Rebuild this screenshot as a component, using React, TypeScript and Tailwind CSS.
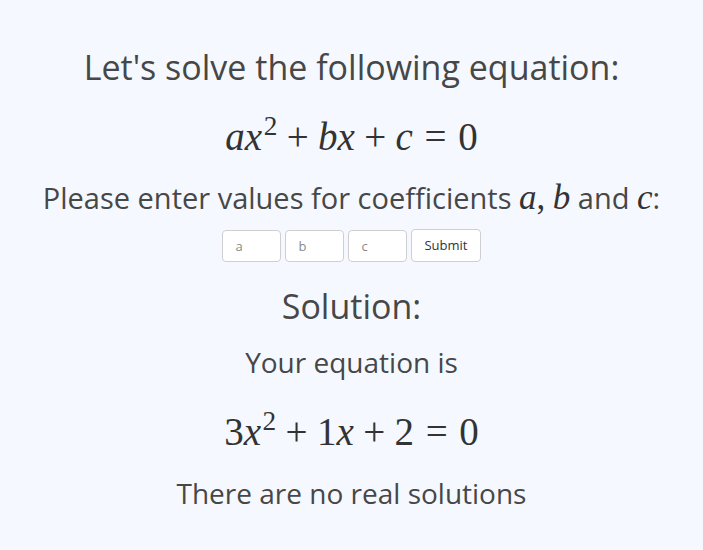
const sans = "font-['Open_Sans','Noto_Sans',sans-serif]";
const serif = "font-['Liberation_Serif','DejaVu_Serif',serif]";

function V({ children }: { children: React.ReactNode }) {
  return <span className="italic">{children}</span>;
}

function Op({ children, wide }: { children: React.ReactNode; wide?: boolean }) {
  return <span className={wide ? "mx-[0.3em]" : "mx-[0.24em]"}>{children}</span>;
}

function Sup({ children }: { children: React.ReactNode }) {
  return <sup className="relative top-[-0.55em] ml-[0.06em] align-baseline text-[0.7em]">{children}</sup>;
}

export default function App() {
  return (
    <div className={`min-h-screen w-full bg-[#f5f9ff] text-[#474747] ${sans}`}>
      <div className="flex flex-col items-center pt-[40px] text-center">
        <h1 className="text-[34px] leading-[54px]">Let's solve the following equation:</h1>
        <div className={`${serif} mt-[23px] text-[39px] leading-[40px] text-[#333]`}>
          <V>ax</V>
          <Sup>2</Sup>
          <Op>+</Op>
          <V>bx</V>
          <Op>+</Op>
          <V>c</V>
          <Op wide>=</Op>0
        </div>
        <p className="mt-[19px] text-[29px] leading-[44px]">
          Please enter values for coefficients{" "}
          <span className={`${serif} text-[35px] italic text-[#333]`}>a</span>
          <span className={`${serif} text-[35px] text-[#333]`}>,</span>{" "}
          <span className={`${serif} text-[35px] italic text-[#333]`}>b</span> and{" "}
          <span className={`${serif} text-[35px] italic text-[#333]`}>c</span>:
        </p>
        <div className="mt-[9px] flex items-center gap-[4px]">
          {["a", "b", "c"].map((p) => (
            <input
              key={p}
              placeholder={p}
              className="h-[32px] w-[59px] rounded-[4px] border border-[#cfcfcf] bg-white px-[12px] text-[13px] text-[#555] outline-none placeholder:text-[#8a8a8a]"
            />
          ))}
          <button className="h-[33px] rounded-[4px] border border-[#cfcfcf] bg-white px-[12px] text-[13px] text-[#333]">
            Submit
          </button>
        </div>
        <h2 className="mt-[20px] text-[34px] leading-[48px]">Solution:</h2>
        <p className="mt-[11px] text-[28px] leading-[42px]">Your equation is</p>
        <div className={`${serif} mt-[29px] text-[39px] leading-[40px] text-[#333]`}>
          3<V>x</V>
          <Sup>2</Sup>
          <Op>+</Op>1<V>x</V>
          <Op>+</Op>2<Op wide>=</Op>0
        </div>
        <p className="mt-[20px] text-[28px] leading-[42px]">There are no real solutions</p>
      </div>
    </div>
  );
}
